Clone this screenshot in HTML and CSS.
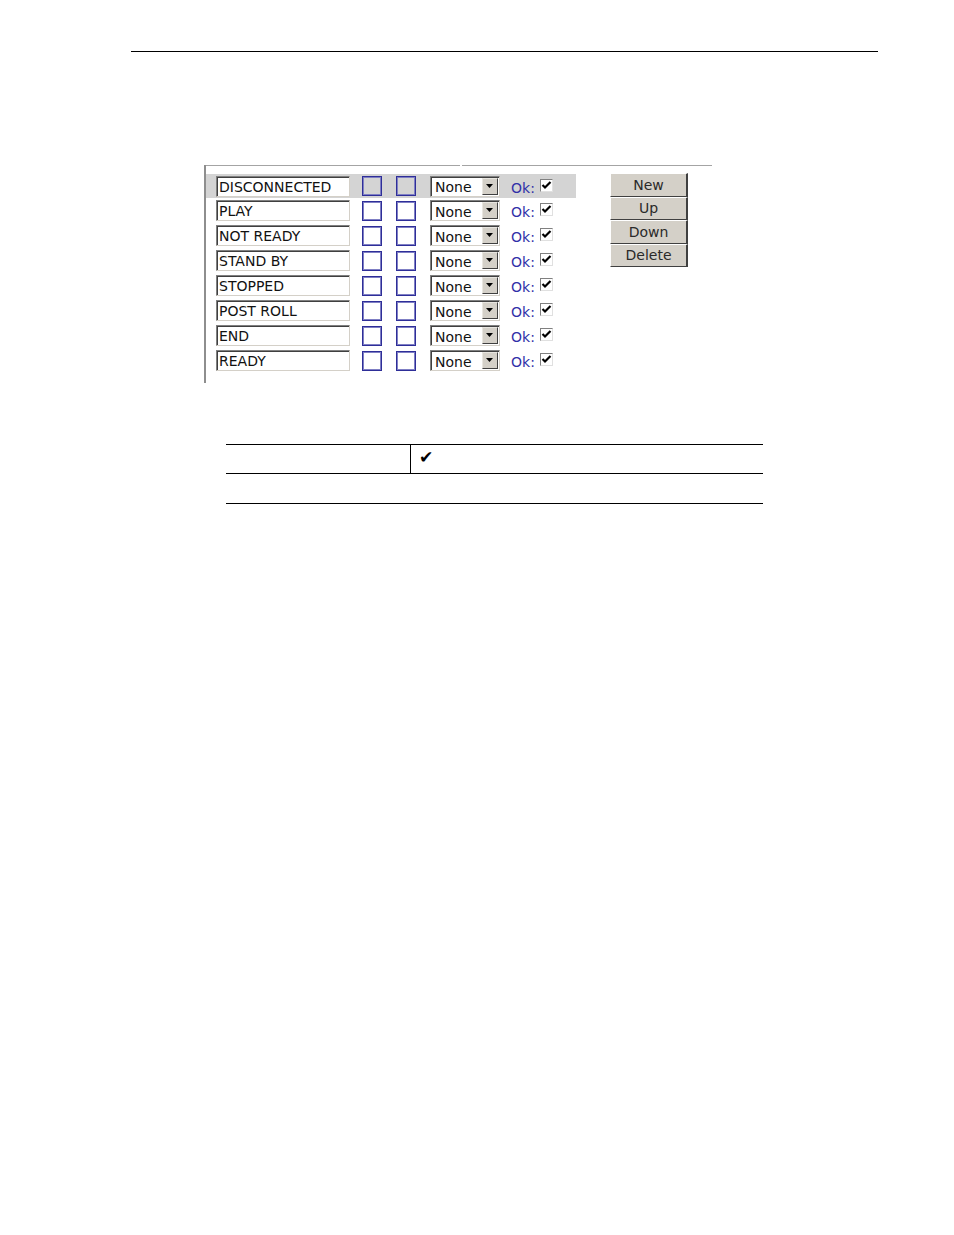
FILE: index.html
```html
<!DOCTYPE html>
<html>
<head>
<meta charset="utf-8">
<link rel="stylesheet" href="styles.css">
</head>
<body>
<div class="page">
  <div class="header-rule"></div>
  <div class="shot">
    <div class="shot-top"><span class="seg seg-a"></span><span class="seg seg-b"></span></div>
    <div class="shot-main">
      <div class="rows">
        <div class="row row-sel"><span class="field">DISCONNECTED</span><span class="box box-a"></span><span class="box"></span><span class="select"><span class="sel-text">None</span><span class="sel-btn"><svg width="8" height="5" viewBox="0 0 8 5"><path d="M0 0H7L3.5 4Z" fill="#000"/></svg></span></span><span class="ok">Ok:</span><span class="chk"><svg width="11" height="11" viewBox="0 0 11 11"><path d="M1.5 5L4 7.5L9.5 2" fill="none" stroke="#000" stroke-width="2.2"/></svg></span></div>
        <div class="row"><span class="field">PLAY</span><span class="box box-a"></span><span class="box"></span><span class="select"><span class="sel-text">None</span><span class="sel-btn"><svg width="8" height="5" viewBox="0 0 8 5"><path d="M0 0H7L3.5 4Z" fill="#000"/></svg></span></span><span class="ok">Ok:</span><span class="chk"><svg width="11" height="11" viewBox="0 0 11 11"><path d="M1.5 5L4 7.5L9.5 2" fill="none" stroke="#000" stroke-width="2.2"/></svg></span></div>
        <div class="row"><span class="field">NOT READY</span><span class="box box-a"></span><span class="box"></span><span class="select"><span class="sel-text">None</span><span class="sel-btn"><svg width="8" height="5" viewBox="0 0 8 5"><path d="M0 0H7L3.5 4Z" fill="#000"/></svg></span></span><span class="ok">Ok:</span><span class="chk"><svg width="11" height="11" viewBox="0 0 11 11"><path d="M1.5 5L4 7.5L9.5 2" fill="none" stroke="#000" stroke-width="2.2"/></svg></span></div>
        <div class="row"><span class="field">STAND BY</span><span class="box box-a"></span><span class="box"></span><span class="select"><span class="sel-text">None</span><span class="sel-btn"><svg width="8" height="5" viewBox="0 0 8 5"><path d="M0 0H7L3.5 4Z" fill="#000"/></svg></span></span><span class="ok">Ok:</span><span class="chk"><svg width="11" height="11" viewBox="0 0 11 11"><path d="M1.5 5L4 7.5L9.5 2" fill="none" stroke="#000" stroke-width="2.2"/></svg></span></div>
        <div class="row"><span class="field">STOPPED</span><span class="box box-a"></span><span class="box"></span><span class="select"><span class="sel-text">None</span><span class="sel-btn"><svg width="8" height="5" viewBox="0 0 8 5"><path d="M0 0H7L3.5 4Z" fill="#000"/></svg></span></span><span class="ok">Ok:</span><span class="chk"><svg width="11" height="11" viewBox="0 0 11 11"><path d="M1.5 5L4 7.5L9.5 2" fill="none" stroke="#000" stroke-width="2.2"/></svg></span></div>
        <div class="row"><span class="field">POST ROLL</span><span class="box box-a"></span><span class="box"></span><span class="select"><span class="sel-text">None</span><span class="sel-btn"><svg width="8" height="5" viewBox="0 0 8 5"><path d="M0 0H7L3.5 4Z" fill="#000"/></svg></span></span><span class="ok">Ok:</span><span class="chk"><svg width="11" height="11" viewBox="0 0 11 11"><path d="M1.5 5L4 7.5L9.5 2" fill="none" stroke="#000" stroke-width="2.2"/></svg></span></div>
        <div class="row"><span class="field">END</span><span class="box box-a"></span><span class="box"></span><span class="select"><span class="sel-text">None</span><span class="sel-btn"><svg width="8" height="5" viewBox="0 0 8 5"><path d="M0 0H7L3.5 4Z" fill="#000"/></svg></span></span><span class="ok">Ok:</span><span class="chk"><svg width="11" height="11" viewBox="0 0 11 11"><path d="M1.5 5L4 7.5L9.5 2" fill="none" stroke="#000" stroke-width="2.2"/></svg></span></div>
        <div class="row"><span class="field">READY</span><span class="box box-a"></span><span class="box"></span><span class="select"><span class="sel-text">None</span><span class="sel-btn"><svg width="8" height="5" viewBox="0 0 8 5"><path d="M0 0H7L3.5 4Z" fill="#000"/></svg></span></span><span class="ok">Ok:</span><span class="chk"><svg width="11" height="11" viewBox="0 0 11 11"><path d="M1.5 5L4 7.5L9.5 2" fill="none" stroke="#000" stroke-width="2.2"/></svg></span></div>
      </div>
      <div class="buttons">
        <span class="btn">New</span>
        <span class="btn">Up</span>
        <span class="btn">Down</span>
        <span class="btn">Delete</span>
      </div>
    </div>
  </div>
  <table class="tbl">
    <tr><td class="c1"></td><td class="c2">✔</td></tr>
    <tr><td class="c1 empty" colspan="2"></td></tr>
  </table>
</div>
</body>
</html>
```

FILE: styles.css
```css
html, body {
  margin: 0;
  padding: 0;
  background: #fff;
}
.page {
  width: 954px;
  height: 1235px;
  font-family: "DejaVu Sans", Verdana, sans-serif;
  font-size: 14px;
  color: #000;
}
.header-rule {
  margin-top: 51px;
  margin-left: 131px;
  width: 747px;
  height: 1px;
  background: #000;
}
.shot {
  margin-top: 113px;
  margin-left: 204px;
  width: 506px;
  height: 218px;
  border-left: 2px solid #8e8e8e;
  display: flex;
  flex-direction: column;
}
.shot-top {
  display: flex;
  gap: 2px;
  height: 1px;
}
.seg {
  display: block;
  height: 1px;
  background: #a4a4a4;
}
.seg-a { width: 254px; }
.seg-b { flex: 1; }
.shot-main {
  display: flex;
  padding-top: 8px;
}
.rows {
  display: flex;
  flex-direction: column;
  width: 370px;
}
.row {
  display: flex;
  align-items: center;
  height: 25px;
  padding-left: 10px;
  box-sizing: border-box;
}
.row-sel {
  background: #d4d4d4;
  height: 24px;
}
.field {
  display: flex;
  align-items: center;
  box-sizing: border-box;
  width: 134px;
  height: 21px;
  padding-left: 2px;
  padding-top: 1px;
  background: #fff;
  border-top: 1px solid #808080;
  border-left: 1px solid #808080;
  border-right: 1px solid #d4d0c8;
  border-bottom: 1px solid #d4d0c8;
  box-shadow: inset 1px 1px 0 #404040;
  white-space: nowrap;
  line-height: 1;
  color: #111;
}
.box {
  display: block;
  box-sizing: border-box;
  width: 20px;
  height: 20px;
  border: 1px solid #2e2e98;
  box-shadow: inset 0 0 0 1px #7f7fc4;
  margin-left: 14px;
}
.box-a { margin-left: 12px; }
.select {
  display: flex;
  align-items: center;
  box-sizing: border-box;
  width: 70px;
  height: 21px;
  margin-left: 14px;
  background: #fff;
  border-top: 1px solid #808080;
  border-left: 1px solid #808080;
  border-right: 1px solid #d4d0c8;
  border-bottom: 1px solid #d4d0c8;
  box-shadow: inset 1px 1px 0 #404040;
  padding-left: 4px;
  line-height: 1;
  color: #111;
}
.sel-text { flex: 1; padding-top: 2px; }
.sel-btn {
  display: flex;
  align-items: center;
  justify-content: center;
  box-sizing: border-box;
  width: 16px;
  height: 17px;
  margin-right: 1px;
  background: #d4d0c8;
  border-top: 1px solid #e8e6e0;
  border-left: 1px solid #e8e6e0;
  border-right: 1px solid #404040;
  border-bottom: 1px solid #404040;
}
.sel-btn svg { display: block; }
.ok {
  margin-left: 11px;
  color: #3030a8;
  line-height: 1;
  padding-top: 3px;
}
.chk {
  display: flex;
  align-items: center;
  justify-content: center;
  box-sizing: border-box;
  width: 13px;
  height: 13px;
  margin-left: 5px;
  margin-top: -2px;
  background: #fff;
  border-top: 1px solid #808080;
  border-left: 1px solid #808080;
  border-right: 1px solid #e0e0e0;
  border-bottom: 1px solid #e0e0e0;
}
.chk svg { display: block; }
.buttons {
  display: flex;
  flex-direction: column;
  margin-left: 34px;
  margin-top: -1px;
}
.btn {
  display: flex;
  align-items: center;
  justify-content: center;
  box-sizing: border-box;
  width: 78px;
  height: 23.5px;
  background: #d4d0c8;
  border-top: 1px solid #fff;
  border-left: 1px solid #fff;
  border-right: 2px solid #404040;
  border-bottom: 1px solid #404040;
  color: #2a2a2a;
  font-size: 14px;
  line-height: 1;
}
.tbl {
  margin-top: 61px;
  margin-left: 226px;
  width: 537px;
  border-collapse: collapse;
}
.tbl td {
  border-top: 1px solid #000;
  border-bottom: 1px solid #000;
  padding: 0;
  height: 28px;
  vertical-align: top;
}
.tbl .c1 { width: 184px; }
.tbl .c2 {
  border-left: 1px solid #000;
  padding-left: 8px;
  padding-top: 4px;
  font-size: 17px;
  line-height: 1;
  box-sizing: border-box;
}
.tbl .empty { height: 29px; }
```
